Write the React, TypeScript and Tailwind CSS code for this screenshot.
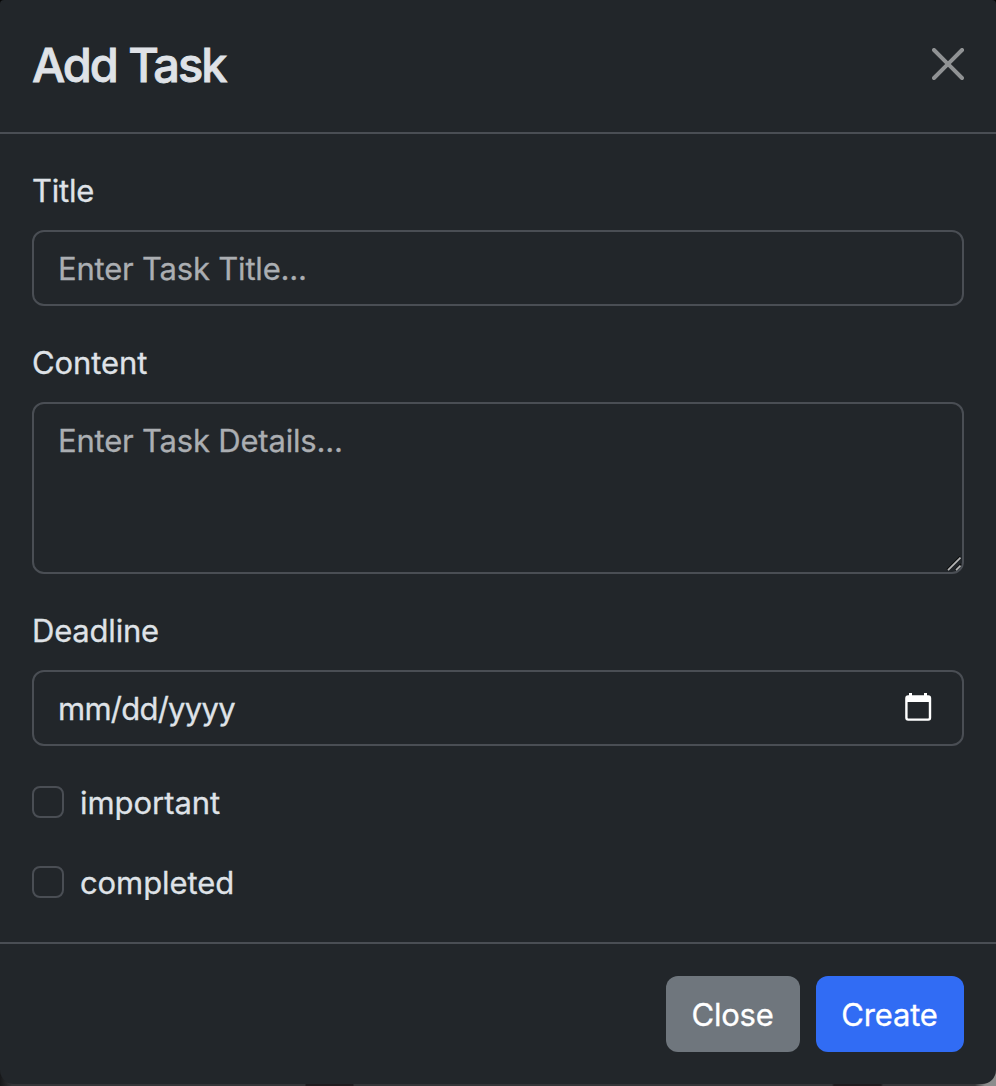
import type { ReactNode } from "react";

function Label({ htmlFor, children, className }: { htmlFor: string; children: ReactNode; className: string }) {
  return (
    <label htmlFor={htmlFor} className={`mb-4 block h-12 w-fit whitespace-nowrap leading-[50px] ${className}`}>
      {children}
    </label>
  );
}

function Check({ id, label, className }: { id: string; label: string; className: string }) {
  return (
    <div className="mb-8 flex h-12 items-center gap-4">
      <input
        id={id}
        type="checkbox"
        className="size-8 shrink-0 appearance-none rounded-lg border-2 border-[#4a4e54] bg-transparent checked:bg-[#316cf4]"
      />
      <label htmlFor={id} className={`pt-0.5 leading-[50px] ${className}`}>
        {label}
      </label>
    </div>
  );
}

export default function App() {
  return (
    <div className="flex h-[1086px] w-[996px] flex-col overflow-hidden bg-[#060606] font-['Inter','Liberation_Sans',sans-serif] text-[31px] text-[#dfe2e7] [-webkit-text-stroke:0.3px]">
      <div className="rounded-t-[4px] bg-[#22262a]">
        <header className="flex h-[134px] items-center justify-between border-b-2 border-[#4a4e54] px-8">
          <h1 className="pb-0.5 text-[47px] leading-[72px] font-medium tracking-[-2.1px] [word-spacing:1px] [-webkit-text-stroke:0.8px]">Add Task</h1>
          <button aria-label="Close dialog" className="mb-1">
            <svg width="32" height="32" viewBox="0 0 16 16" fill="#909294" className="block">
              <path d="M.293.293a1 1 0 0 1 1.414 0L8 6.586 14.293.293a1 1 0 1 1 1.414 1.414L9.414 8l6.293 6.293a1 1 0 0 1-1.414 1.414L8 9.414l-6.293 6.293a1 1 0 0 1-1.414-1.414L6.586 8 .293 1.707a1 1 0 0 1 0-1.414z" />
            </svg>
          </button>
        </header>

        <main className="h-[808px] px-8 pt-8">
          <Label htmlFor="title" className="tracking-[-0.2px]">Title</Label>
          <input
            id="title"
            placeholder="Enter Task Title..."
            className="mb-8 block h-[76px] w-full rounded-xl border-2 border-[#4a4e54] bg-transparent px-6 tracking-[-0.2px] outline-none placeholder:text-[#abaeb2]"
          />
          <Label htmlFor="content" className="tracking-[-0.1px]">Content</Label>
          <div className="relative mb-8 h-[172px]">
            <textarea
              id="content"
              placeholder="Enter Task Details..."
              className="block h-full w-full resize-none rounded-xl border-2 border-[#4a4e54] bg-transparent px-6 pt-[13px] leading-[48px] tracking-[-0.2px] outline-none placeholder:text-[#abaeb2]"
            />
            <svg width="18" height="18" viewBox="0 0 18 18" fill="none" className="pointer-events-none absolute right-0 bottom-px">
              <path d="M1 14.5 14 1.5M9 15 15 9" stroke="#0c0d0e" strokeWidth="1.5" />
              <path d="M2 15.2 14.5 2.7M10 15.2 14.5 10.7" stroke="#b5b5b5" strokeWidth="1.7" />
            </svg>
          </div>
          <Label htmlFor="deadline" className="tracking-[-0.2px]">Deadline</Label>
          <div id="deadline" className="mb-8 flex h-[76px] items-center justify-between rounded-xl border-2 border-[#4a4e54] pr-[29px] pl-6">
            <span className="pt-0.5 tracking-[-0.75px]">mm/dd/yyyy</span>
            <svg width="28" height="28" viewBox="0 0 28 28" fill="none" className="mb-0.5">
              <path d="M5.5 0v4M20.5 0v4" stroke="#fff" strokeWidth="3" />
              <rect x="1.4" y="3.4" width="23.6" height="23.2" rx="1.8" stroke="#fff" strokeWidth="2.4" />
              <path d="M1 3h24v6H1z" fill="#fff" />
            </svg>
          </div>
          <Check id="important" label="important" className="tracking-[-0.05px]" />
          <Check id="completed" label="completed" className="tracking-[-0.1px]" />
        </main>
      </div>

      <div className="h-[144px] bg-[linear-gradient(90deg,#17181a_0,#343538_12px,#343538_305px,#201c1f_306px,#201c1f_353px,#343538_354px,#343538_832px,#201c1f_834px,#201c1f_881px,#353538_883px,#353538_975px,#8c8c8c_985px)]">
        <footer className="flex h-[142px] justify-end gap-4 rounded-b-[14px] border-t-2 border-[#4a4e54] bg-[#22262a] px-8 pt-8 text-white">
          <button className="h-[76px] w-[134px] rounded-xl bg-[#6f767d] pt-0.5 pr-px tracking-[-0.25px]">Close</button>
          <button className="h-[76px] w-[148px] rounded-xl bg-[#316cf4] pt-0.5 pr-px tracking-[-0.2px]">Create</button>
        </footer>
      </div>
    </div>
  );
}
